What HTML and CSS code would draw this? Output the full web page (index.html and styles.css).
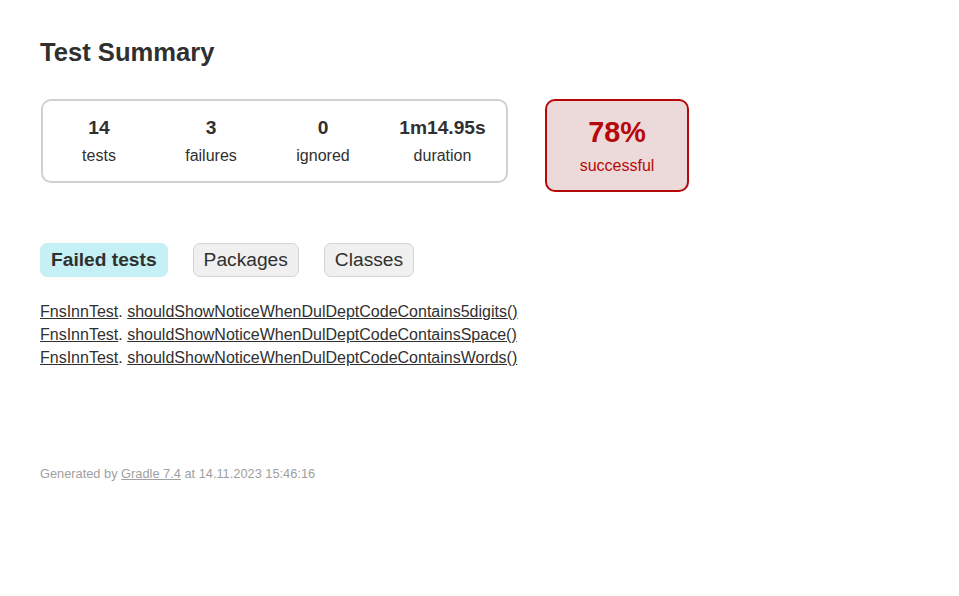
FILE: index.html
```html
<!DOCTYPE html>
<html>
<head>
<meta charset="utf-8">
<title>Test results - Test Summary</title>
<link rel="stylesheet" href="styles.css">
</head>
<body>
<div class="content">
  <h1 class="title">Test Summary</h1>
  <div class="summary">
    <div class="summary-group">
      <div class="info-box">
        <div class="counter">14</div>
        <p class="label">tests</p>
      </div>
      <div class="info-box">
        <div class="counter">3</div>
        <p class="label">failures</p>
      </div>
      <div class="info-box">
        <div class="counter">0</div>
        <p class="label">ignored</p>
      </div>
      <div class="info-box info-box-duration">
        <div class="counter">1m14.95s</div>
        <p class="label">duration</p>
      </div>
    </div>
    <div class="success-rate">
      <div class="percent">78%</div>
      <p class="label">successful</p>
    </div>
  </div>
  <ul class="tab-links">
    <li class="tab tab-selected"><a class="tab-link" href="#tab0">Failed tests</a></li>
    <li class="tab"><a class="tab-link" href="#tab1">Packages</a></li>
    <li class="tab"><a class="tab-link" href="#tab2">Classes</a></li>
  </ul>
  <ul class="link-list">
    <li class="link-item"><a class="link" href="#">FnsInnTest</a>. <a class="link" href="#">shouldShowNoticeWhenDulDeptCodeContains5digits()</a></li>
    <li class="link-item"><a class="link" href="#">FnsInnTest</a>. <a class="link" href="#">shouldShowNoticeWhenDulDeptCodeContainsSpace()</a></li>
    <li class="link-item"><a class="link" href="#">FnsInnTest</a>. <a class="link" href="#">shouldShowNoticeWhenDulDeptCodeContainsWords()</a></li>
  </ul>
  <div class="footer">Generated by <a class="footer-link" href="#">Gradle 7.4</a> at 14.11.2023 15:46:16</div>
</div>
</body>
</html>
```

FILE: styles.css
```css
html, body {
  margin: 0;
  padding: 0;
  background: #ffffff;
}

body {
  font-family: "Liberation Sans", Arial, sans-serif;
  font-size: 16px;
  color: #303030;
}

.content {
  padding: 38px 40px 30px 40px;
}

.title {
  margin: 0;
  font-size: 25.6px;
  font-weight: bold;
  white-space: nowrap;
}

.summary {
  display: flex;
  align-items: flex-start;
  margin-top: 32px;
  margin-bottom: 41px;
}

.summary-group {
  display: flex;
  margin-left: 1px;
  padding: 1px 0 1px 0;
  border: solid 2px #d0d0d0;
  border-radius: 10px;
}

.info-box {
  width: 112px;
  padding: 15px 0 15px 0;
  text-align: center;
}

.info-box-duration {
  width: 127px;
}

.counter {
  font-size: 19.2px;
  font-weight: bold;
  margin-bottom: 8px;
}

.label {
  margin: 0;
}

.success-rate {
  width: 140px;
  margin-left: 37px;
  padding: 15px 0;
  text-align: center;
  border: solid 2px #b60808;
  border-radius: 10px;
  background-color: #ecdada;
  color: #b60808;
}

.percent {
  font-size: 28.8px;
  font-weight: bold;
  margin-bottom: 8px;
}

.tab-links {
  display: flex;
  margin: 0 0 16px 0;
  padding: 10px 0;
  list-style: none;
}

.tab {
  padding: 5px 10px;
  margin-right: 25px;
  border: solid 1px #d4d4d4;
  border-radius: 7px;
  background-color: #f0f0f0;
}

.tab-selected {
  background-color: #c5f0f5;
  border-color: #c5f0f5;
}

.tab-link {
  display: block;
  font-size: 19.2px;
  color: #303030;
  text-decoration: none;
}

.tab-selected .tab-link {
  font-weight: bold;
}

.link-list {
  margin: 16px 0;
  padding: 0;
  list-style: none;
}

.link-item {
  margin-bottom: 5px;
}

.link {
  color: #303030;
}

.footer {
  margin-top: 99px;
  font-size: 12.8px;
  color: #a0a0a0;
  white-space: nowrap;
}

.footer-link {
  color: #a0a0a0;
}
```
